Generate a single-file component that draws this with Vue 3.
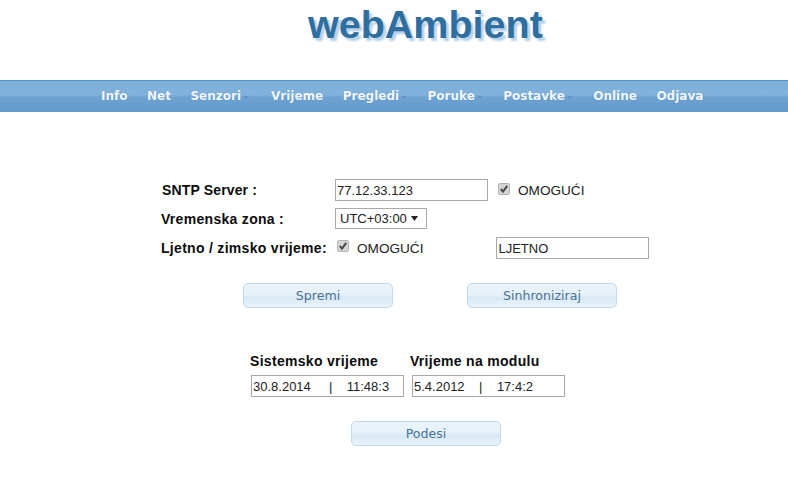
<template>
  <div class="page">
    <h1 class="logo">webAmbient</h1>

    <nav class="menu">
      <a v-for="item in menu" :key="item.name" class="menu-item" :class="{ 'has-sub': item.sub }">
        {{ item.name }}
      </a>
    </nav>

    <form class="form" @submit.prevent>
      <div class="row row-sntp">
        <label class="label lbl-sntp">SNTP Server :</label>
        <input class="field" type="text" v-model="server">
        <span class="check check-first"><svg width="12" height="12" viewBox="0 0 12 12"><rect x="0.5" y="0.5" width="11" height="11" rx="1.5" fill="#d6d6d6" stroke="#b4b4b4"/><path d="M2.8 6 L5 8.6 L9.2 2.8" fill="none" stroke="#4a4a4a" stroke-width="2"/></svg></span>
        <span class="enable">OMOGUĆI</span>
      </div>
      <div class="row row-zone">
        <label class="label">Vremenska zona :</label>
        <div class="select">
          <span>{{ zone }}</span>
          <svg width="7" height="5" viewBox="0 0 7 5"><path d="M0 0 H7 L3.5 5 Z" fill="#222"/></svg>
        </div>
      </div>
      <div class="row row-dst">
        <label class="label">Ljetno / zimsko vrijeme:</label>
        <span class="check check-dst"><svg width="12" height="12" viewBox="0 0 12 12"><rect x="0.5" y="0.5" width="11" height="11" rx="1.5" fill="#d6d6d6" stroke="#b4b4b4"/><path d="M2.8 6 L5 8.6 L9.2 2.8" fill="none" stroke="#4a4a4a" stroke-width="2"/></svg></span>
        <span class="enable">OMOGUĆI</span>
        <input class="field field-season" type="text" v-model="season">
      </div>

      <div class="buttons">
        <button class="btn" type="button">Spremi</button>
        <button class="btn" type="button">Sinhroniziraj</button>
      </div>

      <div class="times">
        <div class="time">
          <div class="time-title">Sistemsko vrijeme</div>
          <input class="field" type="text" v-model="systemTime">
        </div>
        <div class="time">
          <div class="time-title title-module">Vrijeme na modulu</div>
          <input class="field" type="text" v-model="moduleTime">
        </div>
      </div>

      <div class="set-row">
        <button class="btn" type="button">Podesi</button>
      </div>
    </form>
  </div>
</template>

<script setup>
  import { ref } from 'vue';

  const menu = [
    { name: 'Info' },
    { name: 'Net' },
    { name: 'Senzori', sub: true },
    { name: 'Vrijeme' },
    { name: 'Pregledi', sub: true },
    { name: 'Poruke', sub: true },
    { name: 'Postavke', sub: true },
    { name: 'Online' },
    { name: 'Odjava' },
  ];

  const server = ref('77.12.33.123');
  const zone = ref('UTC+03:00');
  const season = ref('LJETNO');
  const systemTime = ref('30.8.2014     |    11:48:3');
  const moduleTime = ref('5.4.2012    |    17:4:2');
</script>

<style>
  html, body {
    background: #fff;
  }
</style>

<style scoped>
  .page {
    width: 788px;
    height: 481px;
    overflow: hidden;
    font-family: "Liberation Sans", Arial, sans-serif;
    color: #0c0c0c;
  }
  .logo {
    margin: 0;
    height: 80px;
    padding: 2px 0 0 308px;
    box-sizing: border-box;
    font-size: 39.5px;
    line-height: 44px;
    font-weight: bold;
    color: #2f6e9e;
    text-shadow: 3px 3px 2px #b4d2ea;
  }
  .menu {
    display: flex;
    height: 32px;
    box-sizing: border-box;
    padding: 0 0 1px 101px;
    align-items: center;
    border-top: 1px solid #4f94c8;
    border-bottom: 1px solid #5f97c6;
    background: linear-gradient(#7eb0da, #82b2db 45%, #6ea3d1 55%, #6299cb);
  }
  .menu-item {
    position: relative;
    margin-right: 19.5px;
    font-family: "DejaVu Sans", Verdana, sans-serif;
    font-size: 12px;
    font-weight: bold;
    color: #f2f7fb;
    white-space: nowrap;
    text-shadow: 0 0 1px rgba(60, 110, 160, 0.5);
  }
  .has-sub {
    margin-right: 28.4px;
  }
  .menu-item:nth-child(3) {
    margin-right: 30px;
  }
  .has-sub::after {
    content: "";
    position: absolute;
    left: 100%;
    top: 7px;
    margin-left: 2px;
    border-left: 3px solid transparent;
    border-right: 3px solid transparent;
    border-top: 3px solid rgba(84, 134, 184, 0.55);
  }
  .form {
    padding: 67px 0 0 161px;
    font-size: 14px;
  }
  .row {
    display: flex;
    align-items: center;
  }
  .label {
    font-weight: bold;
    letter-spacing: 0.3px;
    width: 174px;
    flex: none;
    white-space: nowrap;
  }
  .lbl-sntp {
    padding-left: 1px;
    box-sizing: border-box;
    letter-spacing: 0.15px;
  }
  .field {
    width: 153px;
    height: 22px;
    box-sizing: border-box;
    padding: 0 2px 0 1px;
    border: 1px solid #a9a9a9;
    background: #fff;
    font-family: "Liberation Sans", Arial, sans-serif;
    font-size: 13px;
    color: #222;
    outline: none;
  }
  .row-sntp {
    height: 22px;
  }
  .row-zone {
    height: 21px;
    margin-top: 7px;
  }
  .row-dst {
    height: 22px;
    margin-top: 8px;
  }
  .select {
    display: flex;
    align-items: center;
    justify-content: space-between;
    width: 92px;
    height: 21px;
    box-sizing: border-box;
    padding: 0 8px 0 4px;
    border: 1px solid #a9a9a9;
    font-size: 13px;
    color: #222;
  }
  .check {
    display: flex;
    margin-left: 2px;
    margin-right: 8px;
    margin-bottom: 2px;
  }
  .check-first {
    margin-left: 10px;
  }
  .check-dst {
    margin-bottom: 4px;
  }
  .enable {
    color: #222;
    font-size: 13.6px;
    white-space: nowrap;
  }
  .field-season {
    margin-left: 73px;
  }
  .buttons {
    display: flex;
    gap: 74px;
    padding-left: 82px;
    margin-top: 24px;
  }
  .btn {
    width: 150px;
    height: 25px;
    padding: 0;
    border: 1px solid #c3d9ea;
    border-radius: 5px;
    background: linear-gradient(#e9f3fc, #e6f1fa 45%, #d8e9f6 60%, #eaf4fc);
    font-family: "DejaVu Sans", Verdana, sans-serif;
    font-size: 12.6px;
    color: #4a7296;
  }
  .times {
    display: flex;
    gap: 8px;
    padding-left: 90px;
    margin-top: 45px;
  }
  .time-title {
    margin: 0 0 6px -1px;
    font-weight: bold;
    letter-spacing: 0.3px;
    white-space: nowrap;
  }
  .title-module {
    margin-left: -2px;
  }
  .set-row {
    padding-left: 190px;
    margin-top: 24px;
  }
</style>
